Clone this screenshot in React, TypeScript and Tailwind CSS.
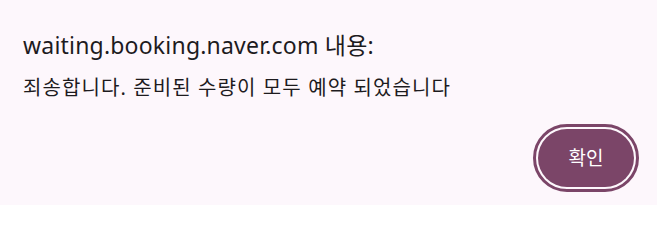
export default function App() {
  return (
    <div
      className="flex h-[205px] w-[657px] flex-col bg-[#fdf7fc] pl-[23px] pr-[18px] text-[#1d1b1e]"
      style={{ fontFamily: '"Noto Sans", "Noto Sans CJK KR", sans-serif' }}
    >
      <h1 className="mt-[29px] text-[23px] leading-[32px] tracking-[0.2px]">waiting.booking.naver.com 내용:</h1>
      <p className="mt-[13px] text-[20px] leading-[28px] tracking-[1.1px]">죄송합니다. 준비된 수량이 모두 예약 되었습니다</p>
      <div className="mt-auto mb-[13px] flex justify-end">
        <button className="flex h-[68px] w-[106px] items-center justify-center rounded-full border-[3px] border-[#7b4568] bg-[#fdf7fc] p-[2px]">
          <span className="flex h-full w-full items-center justify-center rounded-full bg-[#7b4568] text-[19px] text-white">
            확인
          </span>
        </button>
      </div>
    </div>
  );
}
